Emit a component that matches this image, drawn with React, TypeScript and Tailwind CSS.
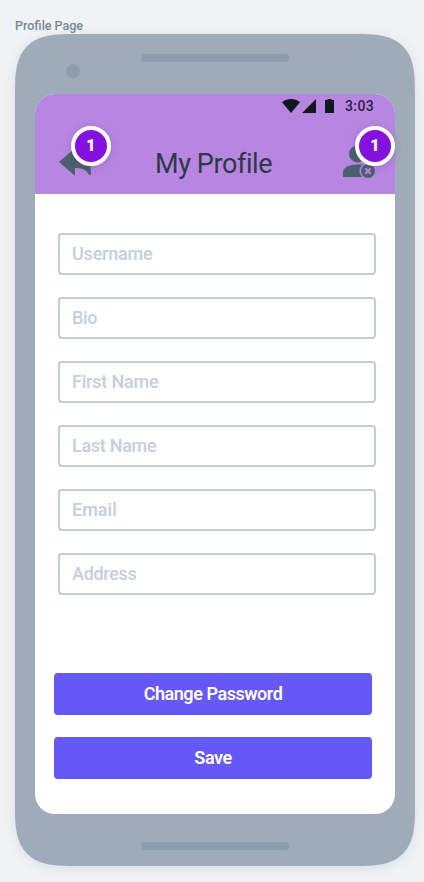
const fields = [
  { label: "Username", spacing: "tracking-[-0.2px]" },
  { label: "Bio", spacing: "tracking-[-0.3px]" },
  { label: "First Name", spacing: "tracking-[-0.2px]" },
  { label: "Last Name", spacing: "tracking-[-0.3px]" },
  { label: "Email", spacing: "tracking-[0px]" },
  { label: "Address", spacing: "tracking-[-0.3px]" },
];

function Badge({ place }: { place: string }) {
  return (
    <span
      className={`absolute flex size-10 items-center justify-center rounded-full border-4 border-white bg-[#8412de] text-white shadow-[0_2px_8px_rgba(40,20,80,0.16)] ${place}`}
    >
      <span className="text-[16px] leading-none font-black">1</span>
    </span>
  );
}

function StatusBar() {
  return (
    <div className="flex h-6 items-center pl-[246px] text-[#10191e]">
      <svg width="20" height="14" viewBox="0 0 20 14" className="shrink-0" fill="currentColor">
        <path d="M1 3.2C6 -1 14 -1 19 3.2L10 14Z" />
      </svg>
      <svg width="14" height="14" viewBox="0 0 14 14" className="ml-px shrink-0" fill="currentColor">
        <path d="M14 0V14H0Z" />
      </svg>
      <svg width="9" height="14" viewBox="0 0 9 14" className="ml-[9px] shrink-0" fill="currentColor">
        <path d="M2.5 0H6.5V1H9V14H0V1H2.5Z" />
      </svg>
      <span className="ml-[11px] text-[14px] leading-none font-medium tracking-[0.4px] text-[#2a2140]">3:03</span>
    </div>
  );
}

export default function App() {
  return (
    <div className="h-[882px] w-[424px] overflow-hidden bg-[#eff3f6] pl-[15px] font-['Roboto','Liberation_Sans',sans-serif]">
      <div className="flex h-[34px] items-start pt-[18px] text-[12.5px] leading-4 font-medium text-[#788896]">
        Profile Page
      </div>
      <div className="flex h-[832px] w-[400px] flex-col items-center rounded-[60px] bg-[#9dacb8] shadow-[0_2px_12px_rgba(60,70,80,0.12)] [corner-shape:superellipse(1.61)]">
        <div className="relative flex h-[60px] w-full shrink-0 justify-center pt-5">
          <div className="h-2 w-[148px] rounded-full bg-[#8d9dac]" />
          <div className="absolute top-[30px] left-[51px] size-3.5 rounded-full bg-[#8d9dac]" />
        </div>
        <main className="flex h-[720px] w-[360px] shrink-0 flex-col rounded-[20px] bg-white">
          <header className="h-[100px] shrink-0 rounded-t-[20px] bg-[#b886e1]">
            <StatusBar />
            <div className="relative h-[76px]">
              <svg
                className="absolute top-[28px] left-[24px]"
                width="33"
                height="32"
                viewBox="0 0 33 32"
                fill="#4c6170"
                stroke="#4c6170"
                strokeWidth="1"
                strokeLinejoin="round"
              >
                <path d="M.5 16 15.5 3V10C26 10 32 16 31.5 28.5H30.5C27 23 23 21.5 15.5 21.5V28.8Z" />
              </svg>
              <h1 className="absolute top-[28px] left-[120px] text-[27px] leading-[36px] font-normal tracking-[-0.4px] whitespace-nowrap text-[#2b3a47]">
                My Profile
              </h1>
              <svg
                className="absolute top-[26px] left-[308px]"
                width="34"
                height="34"
                viewBox="0 0 34 34"
                fill="#4c6170"
              >
                <circle cx="14.5" cy="10" r="8.5" />
                <path d="M0 33V28C0 23.5 6 20.5 14 20.5H23V33Z" />
                <circle cx="25" cy="27" r="8.6" fill="#b886e1" />
                <circle cx="25" cy="27" r="7" />
                <path d="M22.3 24.3 27.7 29.7M27.7 24.3 22.3 29.7" stroke="#b886e1" strokeWidth="2.2" />
              </svg>
              <Badge place="top-2 left-9" />
              <Badge place="top-2 left-80" />
            </div>
          </header>
          <form className="flex flex-col gap-[22px] pt-[39px] pl-[23px]">
            {fields.map((field) => (
              <div
                key={field.label}
                className="flex h-[42px] w-[318px] items-center rounded border-2 border-[#c2ccd7] pl-3 text-[18px] leading-6 font-medium text-[#c3cfd9]"
              >
                <span className={field.spacing}>{field.label}</span>
              </div>
            ))}
          </form>
          <div className="flex flex-col gap-[22px] pt-[78px] pl-[19px]">
            <button className="h-[42px] w-[318px] rounded bg-[#6558f5] text-[18px] leading-6 font-semibold tracking-[-0.45px] text-white">
              Change Password
            </button>
            <button className="h-[42px] w-[318px] rounded bg-[#6558f5] text-[18px] leading-6 font-semibold tracking-[-0.45px] text-white">
              Save
            </button>
          </div>
        </main>
        <div className="mt-7 h-2 w-[148px] rounded-full bg-[#8d9dac]" />
      </div>
    </div>
  );
}
